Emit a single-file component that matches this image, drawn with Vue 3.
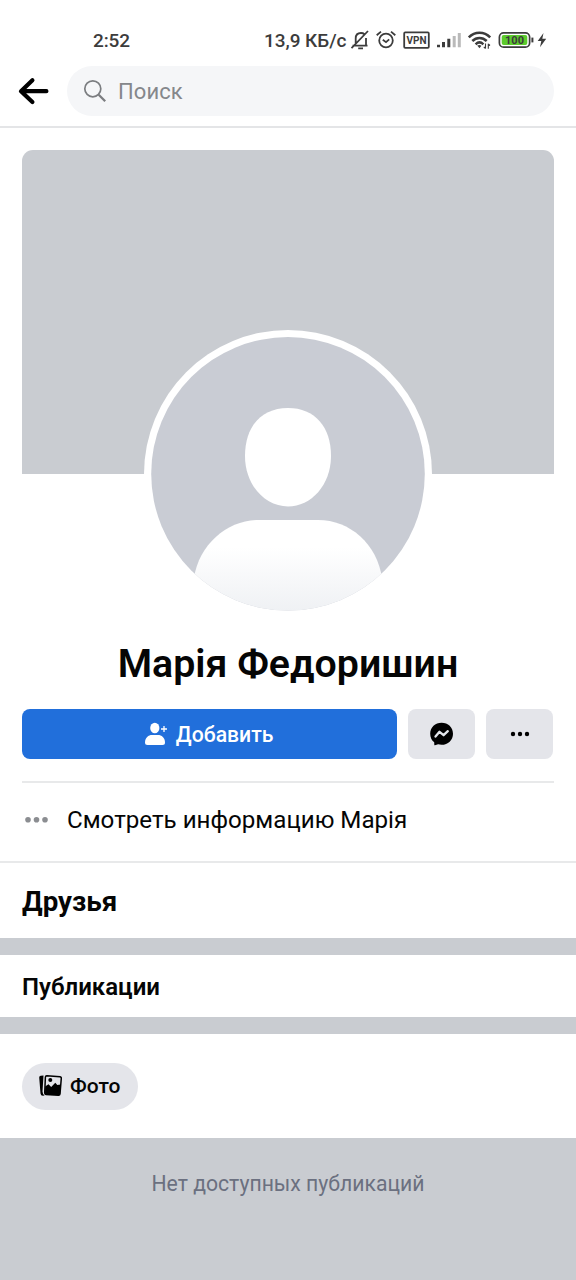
<script setup>
const name = 'Марія Федоришин'
</script>

<template>
  <div class="screen">
    <div class="status">
      <span class="clock">2:52</span>
      <span class="speed">13,9 КБ/с</span>
      <svg class="sys" width="200" height="24" viewBox="350 28 200 24" fill="none" stroke="#3c3c3c" stroke-width="1.8">
        <path d="M352.500 45.600H367.500M355.700 43V38.500C355.700 34.600 358 33 361 33C362.500 33 363.700 33.500 364.500 34.200M366 38V45.600M351.500 48.200L368 31M358.200 48.300H363" />
        <circle cx="386" cy="40.500" r="6.800" />
        <path d="M376.700 35.200L381 31.600M395.300 35.200L391 31.600M382.800 39.800L386 42.200L389.200 39.400" />
        <rect x="404.200" y="32.400" width="24.600" height="15.400" rx="1" />
        <text x="416.500" y="43.800" class="vpn">VPN</text>
        <path d="M438.500 47.200V44.800M443.500 47.200V42M448.800 47.200V38.800" stroke-width="3" />
        <path d="M454.200 47.200V36M459.300 47.200V33" stroke="#b9b9b9" stroke-width="3" />
        <path d="M468.800 37.400C474.800 31.200 484.200 31.200 490.200 37.400M472.300 41C476.400 36.900 482.600 36.900 486.700 41M475.600 44.300C478 42 481 42 483.400 44.300" stroke-width="2.500" />
        <path d="M477.200 45.600L479.500 48.200L481.400 45.800Q479.500 44.200 477.200 45.600Z" fill="#3c3c3c" stroke="none" />
        <path d="M485.500 43.500V48.500M483.800 46.800L485.500 48.500M488.300 48.800V43.800M490 45.500L488.300 43.800" stroke-width="1.100" />
        <rect x="499.400" y="32.800" width="30.200" height="14.400" rx="4.200" stroke-width="1.700" />
        <rect x="501.700" y="35" width="25.600" height="10" rx="2" fill="#5ccb2c" stroke="none" />
        <text x="514.500" y="44.200" class="level">100</text>
        <path d="M532.400 37.600V42.400" stroke-width="2" />
        <path d="M543.500 33L537.700 41H541.300L540 47.200L546.200 38.800H542.300Z" fill="#3c3c3c" stroke="none" />
      </svg>
    </div>

    <header class="topbar">
      <svg class="back" width="32" height="30" viewBox="17 76 32 30" fill="none" stroke="#000" stroke-width="4.200" stroke-linecap="round" stroke-linejoin="round">
        <path d="M46.400 91.200H21.500M32.400 80.200L21 91.200L32.400 102" />
      </svg>
      <div class="search">
        <svg width="24" height="24" viewBox="83 79 24 24" fill="none" stroke="#7b7d80" stroke-width="1.700">
          <circle cx="92.800" cy="88.800" r="8" />
          <path d="M98.700 94.800L105.200 101.200" stroke-width="2.300" />
        </svg>
        <span>Поиск</span>
      </div>
    </header>

    <main>
      <section class="profile">
        <div class="cover">
          <div class="avatar">
            <svg width="274" height="274" viewBox="0 0 274 274">
              <defs>
                <linearGradient id="torso" x1="0" y1="0" x2="0" y2="1">
                  <stop offset="0.300" stop-color="#fff" />
                  <stop offset="1" stop-color="#eff1f4" />
                </linearGradient>
                <clipPath id="round"><circle cx="137" cy="136.800" r="136.800" /></clipPath>
              </defs>
              <g clip-path="url(#round)">
                <rect width="274" height="274" fill="#c9ccd4" />
                <path d="M137 71C164 71 180 90 180 119C180 148 160 169.500 137 169.500C114 169.500 94 148 94 119C94 90 110 71 137 71Z" fill="#fff" />
                <path d="M43 241C48 207 77 183 107 183H167C199 183 226 207 231 241V274H43Z" fill="url(#torso)" />
              </g>
            </svg>
          </div>
        </div>
        <h1><span>{{ name }}</span></h1>
        <div class="actions">
          <button class="btn add">
            <svg width="24" height="24" viewBox="144 722 24 24" fill="#fff">
              <ellipse cx="154.800" cy="728" rx="4.600" ry="5.300" />
              <path d="M145 742.500C145 737.500 148.500 735 152 735H158C161.500 735 165 737.500 165 742.500Q165 745 162.500 745H147.500Q145 745 145 742.500Z" />
              <path d="M164 726V732M161 729H167" stroke="#fff" stroke-width="1.300" />
            </svg>
            <span class="add-label">Добавить</span>
          </button>
          <button class="btn">
            <svg width="24" height="24" viewBox="430 722 24 24">
              <path d="M441.600 722.700C448 722.700 453 727.300 453 733.700S448 744.800 441.600 744.800C440.300 744.800 439.200 744.600 438.100 744.300L435 745.300Q434.400 745.400 434.300 744.700L434.200 742.300C431.700 740.300 430.200 737.300 430.200 733.700C430.200 727.300 435.200 722.700 441.600 722.700Z" />
              <path d="M435.500 736.600L439.500 731.800L443.600 735.200L447.800 731.200" fill="none" stroke="#e4e6eb" stroke-width="2.300" stroke-linejoin="round" stroke-linecap="round" />
            </svg>
          </button>
          <button class="btn">
            <svg width="20" height="6" viewBox="0 0 20 6"><circle cx="3" cy="3" r="2.200" /><circle cx="10" cy="3" r="2.200" /><circle cx="17" cy="3" r="2.200" /></svg>
          </button>
        </div>
      </section>

      <div class="about">
        <svg width="24" height="6" viewBox="0 0 24 6" fill="#8b8d91"><circle cx="3" cy="2.800" r="2.800" /><circle cx="11.500" cy="2.800" r="2.800" /><circle cx="20" cy="2.800" r="2.800" /></svg>
        <span>Смотреть информацию Марія</span>
      </div>

      <section class="friends"><h2>Друзья</h2></section>
      <section class="posts"><h2>Публикации</h2></section>
      <section class="filters">
        <button class="chip">
          <svg width="24" height="24" viewBox="38 1075 24 24">
            <path d="M39.200 1078.500Q39.200 1077 40.700 1076.800L43.500 1076.500L42.500 1092.500Q42.500 1095 44.600 1096.500L43 1096.700Q40.800 1096.800 40.500 1094.500Z" />
            <path d="M46.800 1076.700L60 1077.800Q61.400 1078 61.300 1079.400L60 1094.800Q59.800 1096.400 58.400 1096.300L46 1095.400Q44.600 1095.200 44.700 1093.800L45.400 1078Q45.500 1076.700 46.800 1076.700Z" fill="none" stroke="#000" stroke-width="1.500" />
            <path d="M45.100 1087.500L48.500 1085.200L51.200 1088L55.300 1083.700L57.300 1086L60.700 1085.500L60 1096H45Z" />
            <circle cx="50.300" cy="1081" r="2" />
          </svg>
          <span>Фото</span>
        </button>
      </section>
      <div class="empty"><span>Нет доступных публикаций</span></div>
    </main>
  </div>
</template>

<style>
body {
  background: #fff;
}
</style>

<style scoped>
.screen {
  width: 576px;
  height: 1280px;
  overflow: hidden;
  display: flex;
  flex-direction: column;
  background: #fff;
  color: #050505;
  font-family: Roboto, 'Liberation Sans', sans-serif;
}
.screen * {
  box-sizing: border-box;
}
span {
  white-space: nowrap;
}
svg {
  display: block;
  flex: none;
}
.status {
  height: 66px;
  padding: 28px 0 0 93px;
  display: flex;
  font-size: 19px;
  line-height: 26px;
  color: #3c3c3c;
  font-weight: 500;
}
.clock {
  width: 171px;
  letter-spacing: -0.1px;
}
.speed {
  width: 86px;
  letter-spacing: -0.05px;
}
.sys text {
  fill: #3c3c3c;
  stroke: none;
  text-anchor: middle;
  font-weight: 700;
}
.vpn {
  font-size: 10px;
}
.level {
  font-size: 11px;
}
.topbar {
  height: 62px;
  padding: 0 22px 0 17px;
  display: flex;
  align-items: flex-start;
  gap: 18px;
  border-bottom: 2px solid #e4e5e7;
}
.back {
  margin-top: 10px;
}
.search {
  flex: 1;
  height: 50px;
  border-radius: 25px;
  background: #f5f6f8;
  display: flex;
  align-items: center;
  gap: 11px;
  padding-left: 16px;
  font-size: 22px;
  color: #85878b;
  letter-spacing: 0.1px;
}
.profile {
  margin: 0 22.4px;
  padding-top: 22px;
  height: 655px;
  border-bottom: 2px solid #e8e9ea;
}
.cover {
  height: 324px;
  border-radius: 11px 11px 0 0;
  background: #c9ccd1;
  display: flex;
  justify-content: center;
}
.avatar {
  width: 288px;
  height: 288px;
  margin-top: 180px;
  padding: 7px;
  border-radius: 50%;
  background: #fff;
}
h1 {
  margin: 166px 0 0;
  height: 48px;
  font-size: 39.3px;
  line-height: 48px;
  font-weight: 600;
  text-align: center;
}
.actions {
  margin-top: 21px;
  display: grid;
  grid-template-columns: 374.5px 67px 67px;
  gap: 11.3px;
}
.btn {
  height: 50px;
  padding: 0;
  border: 0;
  border-radius: 8px;
  background: #e4e5ea;
  display: flex;
  align-items: center;
  justify-content: center;
  font: 500 21.2px Roboto, sans-serif;
}
.add {
  background: #216fdb;
  color: #fff;
  gap: 8px;
  padding-right: 2px;
}
.about {
  height: 80px;
  padding: 0 0 4px 25px;
  display: flex;
  align-items: center;
  gap: 18px;
  font-size: 24.15px;
  border-bottom: 2px solid #e8e9ea;
}
h2 {
  margin: 0;
  font-weight: 700;
}
.friends,
.posts {
  display: flex;
  align-items: center;
  padding-left: 22px;
  border-bottom: 17px solid #c9ccd1;
}
.friends {
  height: 92px;
  padding-top: 2px;
}
.friends h2 {
  font-size: 27.7px;
}
.posts {
  height: 79px;
  padding-top: 2px;
}
.posts h2 {
  font-size: 24px;
  font-weight: 600;
}
.filters {
  height: 104px;
  padding: 29px 22px;
}
.chip {
  width: 116px;
  height: 47px;
  border: 0;
  border-radius: 24px;
  background: #e4e5ea;
  padding: 0 0 1px 16px;
  display: flex;
  align-items: center;
  gap: 8px;
  font: 500 21px Roboto, sans-serif;
  color: #050505;
}
.empty {
  height: 142px;
  padding-top: 33px;
  text-align: center;
  background: #c9ccd1;
  color: #6b7080;
  font-size: 21.2px;
  line-height: 26px;
}
</style>
